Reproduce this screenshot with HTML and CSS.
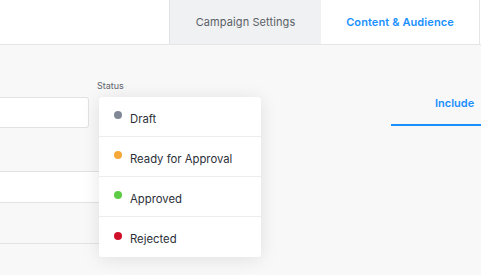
FILE: index.html
```html
<!DOCTYPE html>
<html lang="en">

<head>
  <meta charset="UTF-8">
  <meta name="viewport" content="width=device-width, initial-scale=1.0">
  <title>Campaign</title>
  <link rel="stylesheet" href="styles.css">
</head>

<body>
  <div class="topbar">
    <div class="tabs">
      <div class="tab">Campaign Settings</div>
      <div class="tab active">Content &amp; Audience</div>
    </div>
  </div>

  <div class="main">
    <div class="form-row">
      <div class="field name-field">
        <div class="input"></div>
      </div>
      <div class="field status-field">
        <label>Status</label>
        <div class="input"></div>
        <!-- open dropdown -->
        <ul class="menu">
          <li><i class="dot gray"></i>Draft</li>
          <li><i class="dot orange"></i>Ready for Approval</li>
          <li><i class="dot green"></i>Approved</li>
          <li><i class="dot red"></i>Rejected</li>
        </ul>
      </div>
      <div class="side-tabs">
        <span class="side-tab active">Include</span>
      </div>
    </div>

    <div class="rows">
      <div class="row white"></div>
      <div class="row"></div>
    </div>
  </div>
</body>

</html>
```

FILE: styles.css
```css
* {
  margin: 0;
  padding: 0;
  box-sizing: border-box;
}

body {
  font-family: Inter, "Liberation Sans", sans-serif;
  background-color: #f8f8f8;
  overflow: hidden;
  width: 481px;
  height: 275px;
}

.topbar {
  height: 45px;
  background-color: #fff;
  border-bottom: 1px solid #e6e6e6;
  display: flex;
  justify-content: flex-end;
}

.tabs {
  display: flex;
  margin-right: 1px;
}

.tab {
  height: 44px;
  display: flex;
  align-items: center;
  justify-content: center;
  font-size: 11px;
  color: #5a5f66;
  letter-spacing: 0.1px;
}

.tab:first-child {
  width: 152px;
  background-color: #f0f1f2;
  border-left: 1px solid #e2e3e5;
}

.tab.active {
  width: 159px;
  background-color: #fff;
  color: #1a8fff;
  font-weight: 600;
  border-right: 1px solid #e6e6e6;
}

.main {
  padding-top: 35px;
}

.form-row {
  display: flex;
  align-items: flex-end;
  gap: 10px;
}

.field {
  flex-shrink: 0;
}

/* field is cut by the left edge of the view */
.name-field {
  width: 89px;
}

.name-field .input {
  border-left: none;
  border-radius: 0 3px 3px 0;
}

.status-field {
  width: 162px;
  position: relative;
}

.status-field label {
  display: block;
  font-size: 9px;
  line-height: 12px;
  color: #5f646b;
  margin: 0 0 5px -2px;
}

.input {
  height: 31px;
  background-color: #fff;
  border: 1px solid #e1e2e3;
  border-radius: 3px;
}

.menu {
  position: absolute;
  top: 17px;
  left: 0;
  width: 162px;
  list-style: none;
  background-color: #fff;
  border-radius: 3px;
  box-shadow: 0 2px 18px rgba(0, 0, 0, 0.1);
}

.menu li {
  height: 40px;
  display: flex;
  align-items: center;
  padding: 4px 0 0 15px;
  font-size: 11.3px;
  color: #2c3038;
  border-bottom: 1px solid #ededed;
}

.menu li:last-child {
  border-bottom: none;
}

.dot {
  width: 8px;
  height: 8px;
  border-radius: 50%;
  margin: -7px 8px 0 0;
}

.gray { background-color: #808795; }
.orange { background-color: #f6a83a; }
.green { background-color: #5dcc44; }
.red { background-color: #d0102a; }

.side-tabs {
  flex: 1;
  margin-left: 120px;
  margin-bottom: 2px;
  display: flex;
}

.side-tab {
  flex: 1;
  padding: 0 0 14px 44px;
  font-size: 11px;
  line-height: 14px;
  font-weight: 600;
}

.side-tab.active {
  color: #1a8fff;
  border-bottom: 2px solid #1a8fff;
}

.rows {
  margin-top: 43px;
  width: 220px;
}

.row {
  height: 41px;
  border-bottom: 1px solid #e2e2e2;
}

.row.white {
  height: 32px;
  background-color: #fff;
  border-top: 1px solid #e2e2e2;
}
```
